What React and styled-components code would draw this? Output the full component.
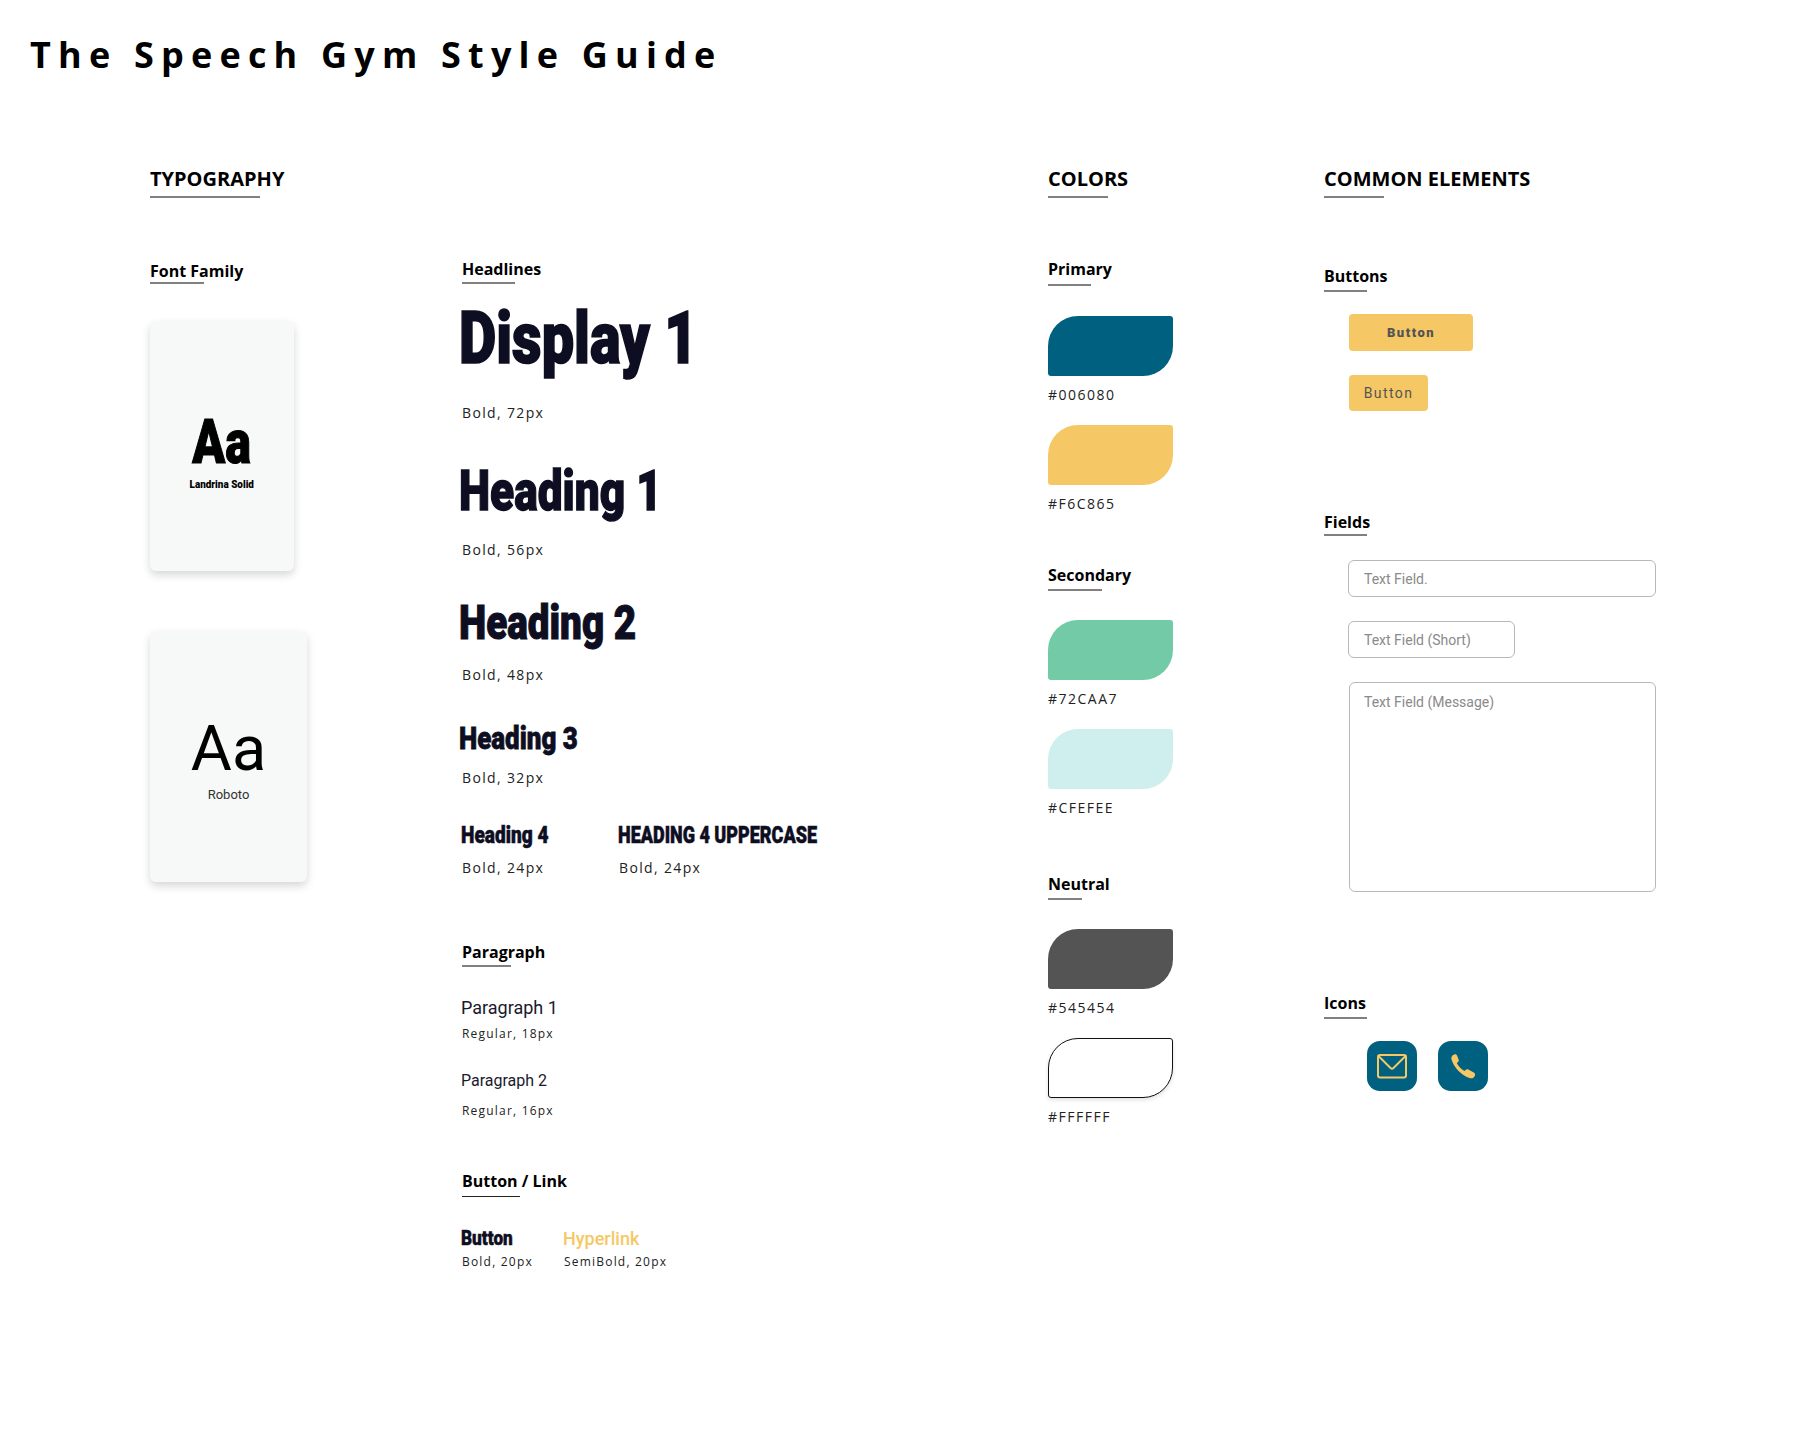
import React from "react";
import styled, { createGlobalStyle } from "styled-components";

const Global = createGlobalStyle`
  html, body { margin: 0; background: #fff; }
  body { font-family: "Open Sans", "Liberation Sans", sans-serif; color: #000; }
`;
const Page = styled.div`width: 1806px; height: 1436px; overflow: hidden;`;
const Title = styled.h1`
  margin: 27px 0 0 30px; height: 56px; font-size: 36px; line-height: 56px; font-weight: 700; letter-spacing: 7.2px; white-space: nowrap;
`;
const Columns = styled.div`display: flex; margin: 81px 0 0 150px;`;
const TypoColumn = styled.section`width: 898px;`;
const ColorColumn = styled.section`width: 276px;`;
const CommonColumn = styled.section`flex: 1;`;
const SectionTitle = styled.h2`
  margin: 0; height: 28px; font-size: 20px; line-height: 30px; font-weight: 700; white-space: nowrap;
`;
const Rule = styled.div`
  width: ${p => p.$w}px; height: ${p => p.$h || 2}px; margin-top: ${p => p.$top || 0}px; background: ${p => p.$c || "#808080"};
`;
const Label = styled.h3`
  margin: ${p => p.$top}px 0 0; height: 21px; font-size: 16px; line-height: 21px; font-weight: 700; white-space: nowrap;
`;
const TypoRow = styled.div`display: flex;`;
const FontColumn = styled.div`width: 312px;`;
const SpecColumn = styled.div`flex: 1;`;
const FontCard = styled.div`
  width: ${p => p.$w}px; height: ${p => p.$h}px; margin-top: ${p => p.$top}px; box-sizing: border-box; padding-top: ${p => p.$pad}px;
  display: flex; flex-direction: column; align-items: center;
  background: #f6f9f8; border-radius: 6px; box-shadow: 0 4px 8px rgba(0,0,0,.16);
`;
const BlockAa = styled.div`
  font: 900 62px/62px Roboto, sans-serif; transform: scaleX(.78); -webkit-text-stroke: 1.2px #000;
`;
const BlockName = styled.div`
  margin-top: 5px; font: 900 11px/14px Roboto, sans-serif; white-space: nowrap; transform: scaleX(.9);
`;
const PlainAa = styled.div`font: 400 63px/63px Roboto, sans-serif;`;
const PlainName = styled.div`margin-top: 7px; font: 400 13px/16px Roboto, sans-serif; color: #333;`;
const Display = styled.div`
  margin: ${p => p.$top}px 0 0 ${p => p.$left ?? -3}px; height: ${p => p.$size}px; font-family: Roboto, sans-serif; font-weight: 900;
  font-size: ${p => p.$size}px; line-height: ${p => p.$size}px; color: #0e0e22; white-space: nowrap;
  transform: scaleX(${p => p.$sx}); transform-origin: left center; -webkit-text-stroke: ${p => p.$size * 0.024}px #0e0e22;
`;
const Caption = styled.div`
  margin-top: ${p => p.$top}px; height: 20px; font-size: 14px; line-height: 20px; letter-spacing: 1.35px; color: #222; white-space: nowrap;
`;
const HeadingPair = styled.div`display: flex; margin-top: ${p => p.$top}px;`;
const PairItem = styled.div`width: ${p => p.$w}px;`;
const Para = styled.div`
  margin: ${p => p.$top}px 0 0 -1px; font-family: Roboto, sans-serif; font-size: ${p => p.$size}px; line-height: ${p => p.$lh}px; color: #1a1a2e; white-space: nowrap;
`;
const Small = styled.div`
  margin-top: ${p => p.$top}px; height: 16px; font-size: 12px; line-height: 16px; letter-spacing: 1.2px; color: #222; white-space: nowrap;
`;
const LinkRow = styled.div`display: flex; margin-top: 30px;`;
const Hyperlink = styled.div`
  margin-left: -1px; height: 24px; font: 500 18px/24px Roboto, sans-serif; color: #f6c865; white-space: nowrap;
`;
const Swatch = styled.div`
  width: 125px; height: 60px; margin-top: ${p => p.$top}px; box-sizing: border-box; background: ${p => p.$c};
  border-radius: 30px 3px 30px 3px;
  ${p => p.$outlined ? "border: 1px solid #111; box-shadow: 0 2px 4px rgba(0,0,0,.12);" : ""}
`;
const Hex = styled.div`
  margin-top: 10px; height: 18px; font-size: 14px; line-height: 18px; letter-spacing: 1.5px; color: #222;
`;
const Button = styled.div`
  display: flex; align-items: center; justify-content: center; box-sizing: border-box;
  width: ${p => p.$w}px; height: ${p => p.$h}px; margin: ${p => p.$top}px 0 0 25px; background: #f6c865; border-radius: 4px; color: #545454;
  font-family: Roboto, sans-serif; font-weight: ${p => p.$bold ? 900 : 400};
  font-size: ${p => p.$bold ? 13 : 14}px; letter-spacing: ${p => p.$bold ? 1.5 : 1.4}px;
`;
const Field = styled.div`
  box-sizing: border-box; width: ${p => p.$w}px; height: ${p => p.$h}px; margin: ${p => p.$top}px 0 0 ${p => p.$left}px;
  padding: ${p => p.$pad}px 14px 0; padding-left: ${p => p.$inset}px; border: 1px solid #b8b8b8; border-radius: 6px;
  font: 400 14px/18px Roboto, sans-serif; color: #8a8a8a; white-space: nowrap;
`;
const IconRow = styled.div`display: flex; gap: 21px; margin: 22px 0 0 43px;`;
const IconTile = styled.div`
  width: 50px; height: 50px; border-radius: 13px; background: #006080; display: flex; align-items: center; justify-content: center;
`;

const HEADING = "Heading";
export default function App() {
  return (
    <Page>
      <Global />
      <Title>The Speech Gym Style Guide</Title>
      <Columns>
        <TypoColumn>
          <SectionTitle>TYPOGRAPHY</SectionTitle>
          <Rule $w={110} $top={4} />
          <TypoRow>
            <FontColumn>
              <Label $top={63}>Font Family</Label>
              <Rule $w={54} />
              <FontCard $w={144} $h={250} $top={37} $pad={90}>
                <BlockAa>Aa</BlockAa>
                <BlockName>Landrina Solid</BlockName>
              </FontCard>
              <FontCard $w={157} $h={251} $top={60} $pad={86}>
                <PlainAa>Aa</PlainAa>
                <PlainName>Roboto</PlainName>
              </FontCard>
            </FontColumn>
            <SpecColumn>
              <Label $top={61}>Headlines</Label>
              <Rule $w={53} $top={2} />
              <Display $size={72} $sx={.8} $top={19}>Display 1</Display>
              <Caption $top={28}>Bold, 72px</Caption>
              <Display $size={56} $sx={.79} $top={40}>{HEADING} 1</Display>
              <Caption $top={21}>Bold, 56px</Caption>
              <Display $size={48} $sx={.805} $top={39}>{HEADING} 2</Display>
              <Caption $top={18}>Bold, 48px</Caption>
              <Display $size={32} $sx={.81} $top={37}>{HEADING} 3</Display>
              <Caption $top={14}>Bold, 32px</Caption>
              <HeadingPair $top={35}>
                <PairItem $w={157}>
                  <Display $size={24} $sx={.795} $top={0} $left={-1}>{HEADING} 4</Display>
                  <Caption $top={11}>Bold, 24px</Caption>
                </PairItem>
                <PairItem $w={300}>
                  <Display $size={24} $sx={.75} $top={0} $left={-1}>HEADING 4 UPPERCASE</Display>
                  <Caption $top={11}>Bold, 24px</Caption>
                </PairItem>
              </HeadingPair>
              <Label $top={64}>Paragraph</Label>
              <Rule $w={49} $top={2} />
              <Para $size={18} $lh={24} $top={29}>Paragraph 1</Para>
              <Small $top={6}>Regular, 18px</Small>
              <Para $size={16} $lh={22} $top={28}>Paragraph 2</Para>
              <Small $top={11}>Regular, 16px</Small>
              <Label $top={52}>Button / Link</Label>
              <Rule $w={58} $h={1} $c="#222" $top={4} />
              <LinkRow>
                <PairItem $w={102}>
                  <Display $size={20} $sx={.86} $top={1} $left={-1}>Button</Display>
                  <Small $top={6}>Bold, 20px</Small>
                </PairItem>
                <PairItem $w={200}>
                  <Hyperlink>Hyperlink</Hyperlink>
                  <Small $top={3}>SemiBold, 20px</Small>
                </PairItem>
              </LinkRow>
            </SpecColumn>
          </TypoRow>
        </TypoColumn>
        <ColorColumn>
          <SectionTitle>COLORS</SectionTitle>
          <Rule $w={60} $top={4} />
          <Label $top={61}>Primary</Label>
          <Rule $w={43} $top={4} />
          <Swatch $c="#006080" $top={30} />
          <Hex>#006080</Hex>
          <Swatch $c="#f6c865" $top={21} />
          <Hex>#F6C865</Hex>
          <Label $top={52}>Secondary</Label>
          <Rule $w={54} $top={3} />
          <Swatch $c="#72caa7" $top={29} />
          <Hex>#72CAA7</Hex>
          <Swatch $c="#cfefee" $top={21} />
          <Hex>#CFEFEE</Hex>
          <Label $top={57}>Neutral</Label>
          <Rule $w={34} $top={3} />
          <Swatch $c="#545454" $top={29} />
          <Hex>#545454</Hex>
          <Swatch $c="#ffffff" $outlined $top={21} />
          <Hex>#FFFFFF</Hex>
        </ColorColumn>
        <CommonColumn>
          <SectionTitle>COMMON ELEMENTS</SectionTitle>
          <Rule $w={60} $top={4} />
          <Label $top={68}>Buttons</Label>
          <Rule $w={43} $top={3} />
          <Button $bold $w={124} $h={37} $top={22}>Button</Button>
          <Button $w={79} $h={36} $top={24}>Button</Button>
          <Label $top={101}>Fields</Label>
          <Rule $w={43} $top={1} />
          <Field $w={308} $h={37} $left={24} $top={24} $pad={9} $inset={15}>Text Field.</Field>
          <Field $w={167} $h={37} $left={24} $top={24} $pad={9} $inset={15}>Text Field (Short)</Field>
          <Field $w={307} $h={210} $left={25} $top={24} $pad={10} $inset={14}>Text Field (Message)</Field>
          <Label $top={101}>Icons</Label>
          <Rule $w={43} $top={3} />
          <IconRow>
            <IconTile>
              <svg width="32" height="26" viewBox="0 0 32 26" fill="none" stroke="#f6c865" strokeWidth="2">
                <rect x="2" y="2" width="28" height="22.5" rx="2" />
                <path d="M2.5 3 L14.5 15 Q16 16.2 17.5 15 L29.5 3" strokeLinecap="round" />
              </svg>
            </IconTile>
            <IconTile>
              <svg width="26" height="26" viewBox="0 0 26 26" fill="#f6c865">
                <path d="M3.5 1.8 C5 .8 6.5 1.2 7 2.5 L8.6 6.5 C9 7.6 8.6 8.6 7.8 9.2 L6.8 10 C8 12.6 11.5 16.6 14.5 18 L15.6 16.9 C16.4 16.1 17.4 16 18.3 16.5 L23.8 19.6 C25.2 20.4 25.6 22 24.6 23.2 L23.6 24.4 C22.6 25.4 21 25.6 19.5 25 C11 22 3.5 14 1.4 6 C1 4.4 2 2.8 3.5 1.8 Z" />
              </svg>
            </IconTile>
          </IconRow>
        </CommonColumn>
      </Columns>
    </Page>
  );
}
